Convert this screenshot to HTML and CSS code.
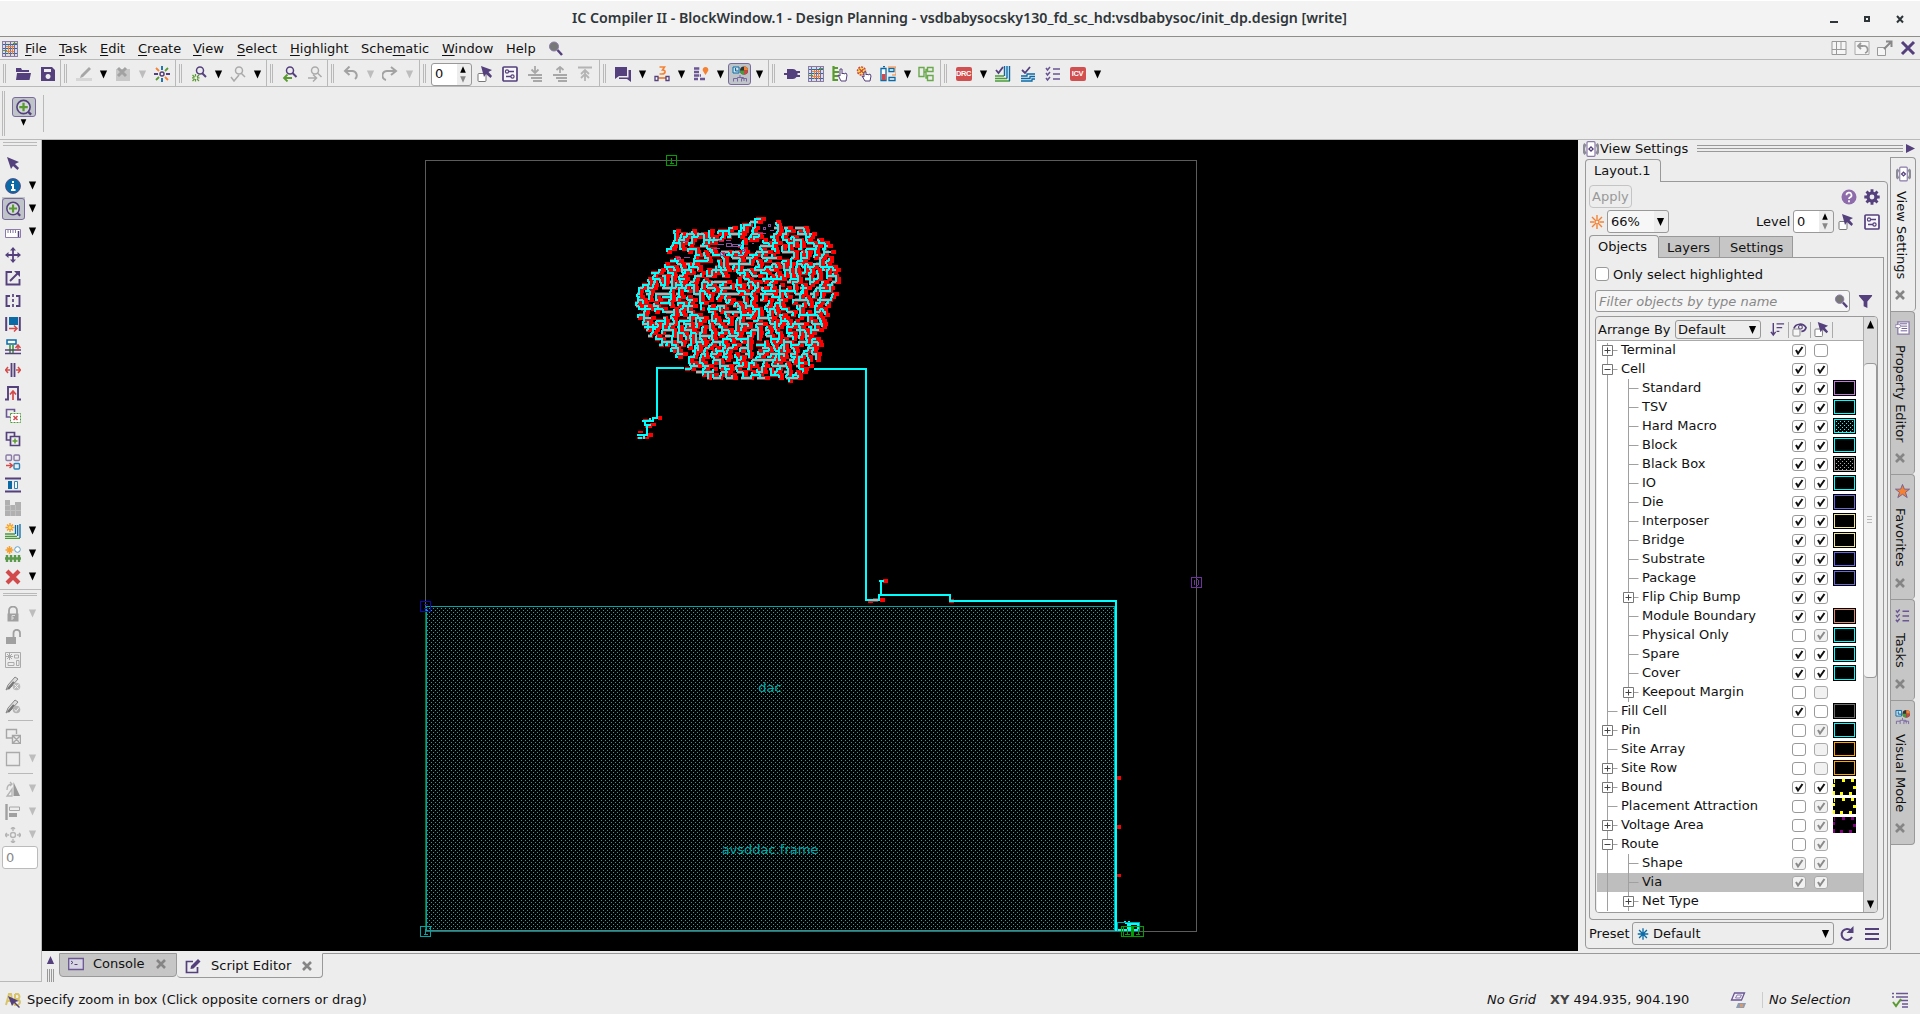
FILE: index.html
```html
<!DOCTYPE html>
<html lang="en">
<head>
<meta charset="utf-8">
<title>IC Compiler II - BlockWindow.1</title>
<link rel="stylesheet" href="styles.css">
</head>
<body>
<svg class="defs" aria-hidden="true">
  <defs>
    <symbol id="app" viewBox="0 0 16 16"><rect x=".5" y=".5" width="15" height="15" fill="#ddd" stroke="#8a7ba8"/><path d="M1 3.500h14M1 7.500h14M1 12.500h14" stroke="#1a6fa8"/><path d="M3.500 1v14M8.500 1v14M12.500 1v14" stroke="#7a68a0"/><path d="M4 5.500h8M4 10.500h8M6.500 4v9M10.500 4v9" stroke="#f0803c"/><path d="M1 9.500h4M11 2.500h4" stroke="#5a9a32"/></symbol>
    <symbol id="mag" viewBox="0 0 16 16"><circle cx="6" cy="5.500" r="4.500" fill="#777" stroke="#8a7ba8"/><path d="M9.500 9l4.500 5" stroke="#54407c" stroke-width="2.500"/></symbol>
    <symbol id="open" viewBox="0 0 16 16"><path d="M1 2h5l1 2h7v2H1zM2 7h14l-1.500 7H1z" fill="#54407c"/></symbol>
    <symbol id="save" viewBox="0 0 16 16"><path fill-rule="evenodd" d="M2 1h10l3 3v11H1V1zM4 3v3h7V3zM8 8a2.500 2.500 0 1 0 .1 0z" fill="#54407c"/></symbol>
    <symbol id="pencil" viewBox="0 0 16 16"><path d="M0 12h16v3H0z" fill="#d6d6d6"/><path d="M13 1l2 2-8 8-3 1 1-3z" fill="#a6a6a6"/></symbol>
    <symbol id="del" viewBox="0 0 16 16"><path d="M1 3h14v12H1z" fill="#c8c8c8"/><path d="M3 2l8 8M11 2l-8 8" stroke="#a2a2a2" stroke-width="3"/></symbol>
    <symbol id="burst" viewBox="0 0 16 16"><circle cx="8" cy="8" r="2" fill="none" stroke="#54407c" stroke-width="1.500"/><path d="M8 0v4M8 12v4" stroke="#0a6aa6" stroke-width="1.800"/><path d="M0 8h4M12 8h4" stroke="#54407c" stroke-width="1.800"/><path d="M2 2l3 3M11 11l3 3" stroke="#f58232" stroke-width="1.800"/><path d="M14 2l-3 3M5 11l-3 3" stroke="#5a9a32" stroke-width="1.800"/></symbol>
    <symbol id="zsel" viewBox="0 0 16 16"><circle cx="9" cy="4.500" r="3.500" fill="none" stroke="#54407c" stroke-width="1.500"/><path d="M11 7l4 4" stroke="#54407c" stroke-width="2"/><path d="M4.500 8v2.500M4.500 13v2.500M1 11.800h2.500M6 11.800h2.500M1.500 9l2 2M8 9l-2 2M1.500 15l2-2M8 15l-2-2" fill="none" stroke="#5a9a32" stroke-width="1.200"/></symbol>
    <symbol id="zchk" viewBox="0 0 16 16"><g fill="none" stroke="#aaa" stroke-width="1.500"><circle cx="9" cy="4.500" r="3.500"/><path d="M11 7l4 4M1 11l3 4 5-6"/></g></symbol>
    <symbol id="zback" viewBox="0 0 16 16"><circle cx="8" cy="4.500" r="3.500" fill="none" stroke="#54407c" stroke-width="1.500"/><path d="M10.500 7l4 4" stroke="#54407c" stroke-width="2"/><path d="M10 12H2M5.500 8.500L2 12l3.500 3.500" fill="none" stroke="#5a9a32" stroke-width="1.800"/></symbol>
    <symbol id="zfwd" viewBox="0 0 16 16"><g fill="none" stroke="#aaa" stroke-width="1.500"><circle cx="8" cy="4.500" r="3.500"/><path d="M10.500 7l4 4M1 12h8M6 8.500L9.500 12 6 15.500"/></g></symbol>
    <symbol id="undo" viewBox="0 0 16 16"><path d="M2 5h7a4.500 4.500 0 0 1 3 8M6.500 .500L2 5l4.500 4" fill="none" stroke="#a2a2a2" stroke-width="2"/></symbol>
    <symbol id="redo" viewBox="0 0 16 16"><path d="M13 5H6a4 4 0 0 0-2 9M9 1l5 4-5 4" fill="none" stroke="#a2a2a2" stroke-width="2"/></symbol>
    <symbol id="pick" viewBox="0 0 16 16"><rect x="1" y="7.500" width="8" height="8" rx="1" fill="#fff" stroke="#777"/><path d="M4 0l11 4-3.500 2L15 10l-1.500 2L9 8 7 11z" fill="#54407c"/></symbol>
    <symbol id="sliders" viewBox="0 0 16 16"><rect x="1" y="1" width="14" height="14" rx="1" fill="#f7f7fb" stroke="#54407c" stroke-width="1.700"/><path d="M7 5.500h5M4 10.500h5" stroke="#54407c" stroke-width="1.300"/><circle cx="5" cy="5.500" r="1.600" fill="none" stroke="#54407c" stroke-width="1.200"/><circle cx="10.500" cy="10.500" r="1.600" fill="none" stroke="#54407c" stroke-width="1.200"/></symbol>
    <symbol id="down" viewBox="0 0 16 16"><path d="M8 0v6M4.500 3.500L8 7l3.500-3.500M1 9h14M4 12h11M6 15h9" fill="none" stroke="#a8a8a8" stroke-width="1.800"/></symbol>
    <symbol id="up" viewBox="0 0 16 16"><path d="M8 7V1M4.500 4L8 1l3.500 3M1 9h14M4 12h11M6 15h9" fill="none" stroke="#a8a8a8" stroke-width="1.800"/></symbol>
    <symbol id="top" viewBox="0 0 16 16"><path d="M1 1.500h14M8 15V4M4 8l4-4 4 4M4 12l4-4 4 4" fill="none" stroke="#b4b4b4" stroke-width="1.800"/></symbol>
    <symbol id="chat" viewBox="0 0 16 16"><path d="M0 1h12v9H4l-4 3zM13.500 4H16v12l-4-3H4v-1.500h9.500z" fill="#54407c"/></symbol>
    <symbol id="net" viewBox="0 0 16 16"><path d="M5.500 1h5L8.500 4c4 0 3 4-.5 4H5.500" fill="none" stroke="#f58232" stroke-width="1.600"/><path d="M3 12h10" stroke="#f58232" stroke-width="1.800"/><path d="M1 10.500h3v4H1zM12 10.500h3v4h-3z" fill="#fff" stroke="#54407c" stroke-width="1.300"/></symbol>
    <symbol id="mapp" viewBox="0 0 16 16"><path d="M1 2.500h6M1 6h5M1 9.500h7M1 13h4M7 13h5" stroke="#6b5694" stroke-width="2.300" stroke-dasharray="5 .7"/><path d="M12.500 9L10 5a2.800 2.800 0 1 1 5 0z" fill="#f58232"/></symbol>
    <symbol id="vis" viewBox="0 0 16 16"><path d="M1 1h6v6H1zM3.500 2v3h3" fill="#cfe3ee" stroke="#0a6aa6"/><circle cx="12" cy="4.500" r="4" fill="#333"/><path d="M12 4.500v-4a4 4 0 0 1 4 4z" fill="#f58232"/><path d="M12 4.500h4a4 4 0 0 1-4 4z" fill="#c84848"/><path d="M12 4.500v4a4 4 0 0 1-4-4z" fill="#4c9a3a"/><path d="M8 9v2M1.500 15.500v-3h4v3M5.500 12.500v-1h6v1M9.500 15.500v-3h5v3M12 12v3" fill="none" stroke="#7a67a4"/></symbol>
    <symbol id="plug" viewBox="0 0 16 16"><path d="M0 7h3V3h6a5 5 0 0 1 3.500 2H16v2h-2.500v2H16v2h-3.500A5 5 0 0 1 9 13H3V9H0z" fill="#54407c"/></symbol>
    <symbol id="treehand" viewBox="0 0 16 16"><path d="M1.500 0v15M2 2h4M2 6h5M2 10h4M2 14h4" fill="none" stroke="#5a9a32" stroke-width="2.200"/><path d="M8 3v7l-2-1 3 6h5l1-6-1-2-2 1-1-1-1 1V3z" fill="#fff" stroke="#54407c"/></symbol>
    <symbol id="xhand" viewBox="0 0 16 16"><circle cx="5.500" cy="5" r="4" fill="#f9dc50" stroke="#c84848" stroke-width="1.500" stroke-dasharray="2 1"/><path d="M3.500 3l4 4M7.500 3l-4 4" stroke="#c84848" stroke-width="1.300"/><path d="M8 6v5l-2-1 3 5h5l1-5-1-2-2 1-1-1-1 1V6z" fill="#fff" stroke="#54407c"/></symbol>
    <symbol id="batt" viewBox="0 0 16 16"><path d="M1 2.500h5v12H1zM3 .500h2" fill="#fff" stroke="#0a6aa6" stroke-width="1.300"/><path d="M2 8h3.500v6H2z" fill="#d24a4a"/><path d="M9 2.500h5v3H9zM9 11.500h6v3H9z" fill="#fff" stroke="#0a6aa6" stroke-width="1.300"/><path d="M8 1h8v8h-4" fill="none" stroke="#f58232"/></symbol>
    <symbol id="gtree" viewBox="0 0 16 16"><path d="M1 1.500h5v9H1zM9.500 1.500H15v4H9.500zM9.500 9.500H15v5H9.500zM6 6h2v6h1.500M8 6V3.500h1.500" fill="none" stroke="#6aa84c" stroke-width="1.400"/></symbol>
    <symbol id="stackg" viewBox="0 0 16 16"><path d="M0 10h9M0 12.500h12M0 15h15" stroke="#4c9a3a" stroke-width="1.400"/><path d="M9.500 0v10M12 0v12.500M14.500 0v15" stroke="#0a6aa6" stroke-width="1.400"/><path d="M1 4l2.500 3L8 1" fill="none" stroke="#54407c" stroke-width="1.800"/></symbol>
    <symbol id="stackb" viewBox="0 0 16 16"><path d="M1 10h6V8h8M1 12.500h9v-2h5M1 15h11v-2h3" fill="none" stroke="#0a6aa6" stroke-width="1.300"/><path d="M2 4l3 3L10 1" fill="none" stroke="#54407c" stroke-width="1.800"/></symbol>
    <symbol id="checks" viewBox="0 0 16 16"><path d="M1 2l1.500 2L5 1M1 7l1.500 2L5 6M1 12l1.500 2L5 11M8 3h7M8 8h7M8 13h7" fill="none" stroke="#6b5694" stroke-width="1.500"/></symbol>
    <symbol id="grid4" viewBox="0 0 16 16"><path d="M1 1.500h14v13H1zM5.500 2v12M1 9.500h14M10 2v8" fill="#f5f5f5" stroke="#999"/></symbol>
    <symbol id="revert" viewBox="0 0 16 16"><path d="M1 1.500h14v13H1z" fill="#f5f5f5" stroke="#aaa"/><path d="M4 6h5a3 3 0 0 1 2 7M7 3L4 6l3 3" fill="none" stroke="#999" stroke-width="1.800"/></symbol>
    <symbol id="detach" viewBox="0 0 16 16"><path d="M.5 7.500h8v8h-8z" fill="#f5f5f5" stroke="#999"/><path d="M7 9l7-7M9 1.500h5.500V7" fill="none" stroke="#888" stroke-width="2"/></symbol>
    <symbol id="bigx" viewBox="0 0 16 16"><path d="M2 2l12 12M14 2L2 14" stroke="#54407c" stroke-width="3"/></symbol>
    <symbol id="zin" viewBox="0 0 18 18"><circle cx="8.500" cy="8.500" r="7" fill="#d5d8dc" stroke="#54407c" stroke-width="1.700"/><path d="M8.500 4v9M4 8.500h9" stroke="#5a9a32" stroke-width="2.400"/><path d="M13.500 13.500l3 3" stroke="#54407c" stroke-width="2.500"/></symbol>
    <symbol id="cur" viewBox="0 0 16 16"><path d="M2 2l12 5-4 2 4 4-1.500 2L8 11l-2 3z" fill="#54407c"/></symbol>
    <symbol id="info" viewBox="0 0 16 16"><circle cx="8" cy="8" r="7.500" fill="#0a6aa6" stroke="#54407c" stroke-width=".8"/><path d="M8 3v2M6 7h2v5M6 12h4.500" fill="none" stroke="#fff" stroke-width="2"/></symbol>
    <symbol id="ruler" viewBox="0 0 16 16"><path d="M.5 5.500h15v8H.5z" fill="#fff" stroke="#8a7ba8"/><path d="M3 6v3M5.500 6v3M8 6v3M10.500 6v3" stroke="#8a7ba8"/><path d="M13.500 7v6" stroke="#54407c" stroke-width="1.500"/></symbol>
    <symbol id="move" viewBox="0 0 16 16"><path d="M8 1v14M1 8h14" stroke="#54407c" stroke-width="1.800"/><path d="M8 0l3 3.500H5zM8 16l3-3.500H5zM0 8l3.500-3v6zM16 8l-3.500-3v6z" fill="#54407c"/></symbol>
    <symbol id="ext" viewBox="0 0 16 16"><path d="M7 2H1.500v12.500h13V9M5 11l8-8" fill="none" stroke="#54407c" stroke-width="1.900"/><path d="M9 1h6v6z" fill="#54407c"/></symbol>
    <symbol id="flip" viewBox="0 0 16 16"><path d="M5 3H1.500v10H5M11 3h3.500v10H11" fill="none" stroke="#54407c" stroke-width="1.900"/><path d="M8 1v14" stroke="#54407c" stroke-width="1.700" stroke-dasharray="3 2"/></symbol>
    <symbol id="fit" viewBox="0 0 16 16"><path d="M1.200 1v14M14.800 1v14" stroke="#54407c" stroke-width="2"/><path d="M4 1h9v8H4z" fill="#0a6aa6"/><path d="M4 12.500h7M9 9.500l3 3-3 3" fill="none" stroke="#d24a4a" stroke-width="1.500"/></symbol>
    <symbol id="tee" viewBox="0 0 16 16"><path d="M2 1h9v4H2z" fill="#fff" stroke="#0a6aa6" stroke-width="1.500"/><path d="M5 6v8M8 6v8" stroke="#4c9a3a" stroke-width="1.700"/><path d="M0 11h16M0 14.500h16" stroke="#54407c" stroke-width="1.500"/><path d="M13 12V7M10.500 9L13 6l2.500 3" fill="none" stroke="#d24a4a" stroke-width="1.500"/></symbol>
    <symbol id="spread" viewBox="0 0 16 16"><path d="M6.500 1v14M9.500 1v14" stroke="#54407c" stroke-width="1.800"/><path d="M3 5L.5 8 3 11M13 5l2.500 3-2.500 3M1 8h4M11 8h4" fill="none" stroke="#d24a4a" stroke-width="1.500"/></symbol>
    <symbol id="step" viewBox="0 0 16 16"><path d="M0 14.500h3V2h10v12.500h3" fill="none" stroke="#54407c" stroke-width="1.900"/><path d="M8 15V7M5 9.500L8 6l3 3.500" fill="none" stroke="#d24a4a" stroke-width="1.700"/></symbol>
    <symbol id="cpx" viewBox="0 0 16 16"><path d="M5 9H1.500V1.500h8V4" fill="none" stroke="#6b5694" stroke-width="1.600"/><path d="M5.500 5.500h10v9h-10z" fill="#fff" stroke="#4c9a3a" stroke-dasharray="2 1"/><path d="M8.500 8l4 4M12.500 8l-4 4" stroke="#d24a4a" stroke-width="1.500"/></symbol>
    <symbol id="cpp" viewBox="0 0 16 16"><path d="M5 9H1.500V1.500h8V5M5.500 5.500h9v9h-9z" fill="none" stroke="#54407c" stroke-width="1.700"/><path d="M10 7.500v5M7.500 10h5" stroke="#5a9a32" stroke-width="1.500"/></symbol>
    <symbol id="four" viewBox="0 0 16 16"><g fill="none" stroke="#8a7ba8" stroke-width="1.400"><rect x="1" y="1" width="5.500" height="5.500" rx="1"/><rect x="9" y="1" width="5.500" height="5.500" rx="1"/></g><rect x="9" y="9.500" width="5.500" height="5.500" rx="1" fill="none" stroke="#2a82ba" stroke-width="1.400"/><path d="M1 11.500h6M4.500 9l3 2.500-3 2.500" fill="none" stroke="#d24a4a" stroke-width="1.500"/></symbol>
    <symbol id="dist" viewBox="0 0 16 16"><path d="M0 1.500h16M0 14.500h16" stroke="#54407c" stroke-width="2"/><path d="M3 4h4v8H3z" fill="#0a6aa6"/><path d="M9.500 4.500h3v7h-3z" fill="#fff" stroke="#2a82ba"/></symbol>
    <symbol id="mosaic" viewBox="0 0 16 16"><path d="M0 0h5v5h5V2h6v14H0z" fill="#b0b0b0"/><path d="M0 5.500h5M0 10.500h16M5.500 5v11M10.500 5v11" stroke="#c0c0c0"/></symbol>
    <symbol id="starl" viewBox="0 0 16 16"><path d="M5 0v9M.5 4.500h9M2 1.500l6 6M8 1.500l-6 6" stroke="#f5a032" stroke-width="1.500"/><circle cx="5" cy="4.500" r="1.500" fill="#fbe060"/><path d="M0 11h10M0 13.300h12M0 15.500h15" stroke="#4c9a3a" stroke-width="1.300"/><path d="M10.500 2v9M12.700 2v11M15 1v14" stroke="#0a6aa6" stroke-width="1.300"/></symbol>
    <symbol id="starg" viewBox="0 0 16 16"><path d="M4.500 0v8M.5 4h8M2 1.500l5 5M7 1.500l-5 5" stroke="#f5a032" stroke-width="1.500"/><circle cx="12.500" cy="3.500" r="2.800" fill="#fff" stroke="#5fa0c8"/><path d="M0 12.500h16M2 9v7M6 9v7M10 9v7M14 9v7" stroke="#5a9a4a" stroke-width="2.400"/></symbol>
    <symbol id="redx" viewBox="0 0 16 16"><path d="M2 2l12 12M14 2L2 14" stroke="#d24a4a" stroke-width="4.200"/></symbol>
    <symbol id="lock" viewBox="0 0 16 16"><path d="M4 8V4.500a4 4 0 0 1 8 0V8" fill="none" stroke="#a0a0a0" stroke-width="1.800"/><path d="M2.500 7.500h11v8h-11z" fill="#a0a0a0"/><path d="M7 14v-4.500h3M7 12h2" fill="none" stroke="#ddd"/></symbol>
    <symbol id="unlock" viewBox="0 0 16 16"><path d="M8.500 8V4a3 3 0 0 1 6.500 0v4" fill="none" stroke="#a0a0a0" stroke-width="1.800"/><path d="M1 8h10v7H1z" fill="#a0a0a0"/></symbol>
    <symbol id="fplan" viewBox="0 0 16 16"><g fill="none" stroke="#aaa"><path d="M.5 .5h15v15H.5zM9.500 3h4v3h-4zM3 10.500h6v3H3zM11.500 8.500h2.500v5h-2.500z"/><path d="M4.500 1v7M1 4.500h7M2 2l5 5M7 2L2 7"/></g></symbol>
    <symbol id="penx" viewBox="0 0 16 16"><path d="M1 15l2-5 7-8 3 2-7 8z" fill="#ddd" stroke="#888"/><path d="M3 14l6-7" stroke="#777" stroke-width="2.500"/><circle cx="11.500" cy="11.500" r="3.800" fill="#bbb"/><path d="M9.500 9.500l4 4M13.500 9.500l-4 4" stroke="#eee"/></symbol>
    <symbol id="penc" viewBox="0 0 16 16"><path d="M1 15l2-5 7-8 3 2-7 8z" fill="#ddd" stroke="#888"/><path d="M3 14l6-7" stroke="#777" stroke-width="2.500"/><circle cx="11.500" cy="11.500" r="3.800" fill="#b4b4b4"/><path d="M9.500 11.500l1.500 2 3-4" fill="none" stroke="#eee"/></symbol>
    <symbol id="cpg" viewBox="0 0 16 16"><path d="M7 10H1.500V1.500h10V6M7.500 7.500h8v8h-8zM7.500 7.500l8 8M15.500 7.500l-8 8" fill="none" stroke="#a6a6a6" stroke-width="1.400"/></symbol>
    <symbol id="box" viewBox="0 0 16 16"><path d="M1.500 1.500h13v13h-13z" fill="none" stroke="#aaa" stroke-width="1.300"/></symbol>
    <symbol id="mir" viewBox="0 0 16 16"><path d="M8.500 1v14H15z" fill="#999"/><path d="M7 8v7H2zM2 9c0-4 2-6 5-6M5 1l2 2-2 2" fill="none" stroke="#b4b4b4" stroke-width="1.300"/></symbol>
    <symbol id="align" viewBox="0 0 16 16"><path d="M1.500 0v16" stroke="#a0a0a0" stroke-width="2.400"/><path d="M4.500 3h10v3.500h-10z" fill="none" stroke="#a6a6a6"/><path d="M4 9h8v4H4z" fill="#a0a0a0"/></symbol>
    <symbol id="tgt" viewBox="0 0 16 16"><g fill="none" stroke="#b4b4b4" stroke-width="1.400"><circle cx="8" cy="8" r="2.500"/><path d="M8 0v4M8 12v4M0 8h4M12 8h4M6 2l2-2 2 2M6 14l2 2 2-2M2 6L0 8l2 2M14 6l2 2-2 2"/></g></symbol>
    <symbol id="eyev" viewBox="0 0 16 16"><path d="M2.500 3A8 8 0 0 0 2.500 13M13.500 3A8 8 0 0 1 13.500 13" fill="none" stroke="#8c8c98" stroke-width="3"/><rect x="4" y=".7" width="8" height="14.600" rx="1" fill="#fff" stroke="#8a7ba8" stroke-width="1.200"/><path d="M8 5l3 3-3 3-3-3z" fill="#54407c"/><circle cx="8" cy="8" r=".9" fill="#fff"/></symbol>
    <symbol id="help" viewBox="0 0 16 16"><circle cx="8" cy="8" r="7.500" fill="#8e6cab"/><path d="M5.500 6.200a2.500 2.500 0 1 1 3.500 2.200q-1 .4-1 1.600M8 11.300v2" fill="none" stroke="#fff" stroke-width="1.700"/></symbol>
    <symbol id="gear" viewBox="0 0 16 16"><circle cx="8" cy="8" r="4" fill="none" stroke="#54407c" stroke-width="3.200"/><path d="M8 .3v3M8 12.700v3M.3 8h3M12.700 8h3M2.500 2.500l2.200 2.200M11.300 11.300l2.200 2.200M13.500 2.500l-2.200 2.200M4.700 11.300l-2.200 2.200" stroke="#54407c" stroke-width="2.900"/></symbol>
    <symbol id="sun" viewBox="0 0 16 16"><circle cx="8" cy="8" r="2" fill="none" stroke="#f58232" stroke-width="1.300"/><path d="M8 1v4M8 11v4M1 8h4M11 8h4M3 3l3 3M10 10l3 3M13 3l-3 3M6 10l-3 3" stroke="#f58232" stroke-width="1.400"/></symbol>
    <symbol id="funnel" viewBox="0 0 16 16"><path d="M1 1h14v1L10 8v7l-4-2V8L1 2z" fill="#54407c"/></symbol>
    <symbol id="sort" viewBox="0 0 16 16"><path d="M3.500 1v12M1 10.500l2.500 3.500L6 10.500M7 2h8M7 6h6M7 10h3" fill="none" stroke="#54407c" stroke-width="1.500"/></symbol>
    <symbol id="seen" viewBox="0 0 16 16"><path d="M2 7c2-6 10-6 13-1-1 3-3 4-5 4" fill="none" stroke="#54407c" stroke-width="1.800"/><circle cx="9" cy="5.500" r="2" fill="none" stroke="#54407c" stroke-width="1.200"/><rect x="1" y="7.500" width="7.500" height="7.500" rx="1" fill="#f5f5f5" stroke="#888"/></symbol>
    <symbol id="prop" viewBox="0 0 16 16"><path d="M3 1.500h12v13H3z" fill="#fff" stroke="#8a7ba8" stroke-width="1.400"/><path d="M5 3.500h8M7 6h6M7 8.500h6M6 11h7" stroke="#6b5694"/><path d="M0 5l4-1 3 2-3 2-4-1z" fill="#fff" stroke="#8a7ba8"/></symbol>
    <symbol id="fav" viewBox="0 0 16 16"><path d="M8 1l2 5h5.500l-4.300 3.500L13 15 8 11.500 3 15l1.800-5.500L.5 6H6z" fill="#f58232" stroke="#6b5694" stroke-width=".9"/></symbol>
    <symbol id="snow" viewBox="0 0 16 16"><path d="M8 1.500v13M2 8h12M3.500 3.500l9 9M12.500 3.500l-9 9" stroke="#0a6aa6" stroke-width="1.500"/></symbol>
    <symbol id="refresh" viewBox="0 0 16 16"><path d="M12 4.500A5.500 5.500 0 1 0 13 11" fill="none" stroke="#54407c" stroke-width="2"/><path d="M14.500 0v7h-7z" fill="#54407c"/></symbol>
    <symbol id="menu" viewBox="0 0 16 16"><path d="M1 3h14M1 8h14M1 13h14" stroke="#54407c" stroke-width="2"/></symbol>
    <symbol id="smx" viewBox="0 0 10 10"><path d="M1 1l8 8M9 1L1 9" stroke="#858585" stroke-width="2.600"/></symbol>
    <symbol id="term" viewBox="0 0 16 16"><path d="M.7 2.500h14.600v11H.7z" fill="#d8d5e2" stroke="#6b5694" stroke-width="1.300"/><path d="M3 5l2 1.500L3 8M6.500 8.500h3" fill="none" stroke="#54407c"/></symbol>
    <symbol id="edit" viewBox="0 0 16 16"><path d="M8 3.500H1.500v11h11V9" fill="none" stroke="#54407c" stroke-width="1.700"/><path d="M6 8l7-7 2.500 2.500-7 7-3 .5z" fill="#54407c"/></symbol>
    <symbol id="hint" viewBox="0 0 16 16"><path d="M1 13L4 2h2l2 11M2 9h5M10 2v12M10 2h3q3 3 0 5h-3M13 7q4 3 0 6h-3" fill="none" stroke="#d9c468" stroke-width="2"/><path d="M3 4l11 5-4 1 5 5-1 1-5-5-2 3z" fill="#54407c"/></symbol>
    <symbol id="layers" viewBox="0 0 16 16"><path d="M4.500 1h10l-3 7h-10z" fill="#f3f0fa" stroke="#6b5694" stroke-width="1.300"/><path d="M7 3h4.500l-1.500 3H5.500z" fill="none" stroke="#8a7ba8"/><path d="M8 11h8l-2 5H6z" fill="#8f9bb0"/><path d="M10 12h3v3h-3z" fill="#d89a6a"/></symbol>
    <symbol id="okl" viewBox="0 0 16 16"><path d="M0 1.500h2M4 1.500h12M0 5h2M4 5h12M8 8.500h8M10 12h6M10 15h6" stroke="#6b5694" stroke-width="1.700"/><path d="M1 10l3 4 5-7" fill="none" stroke="#5a9a32" stroke-width="2"/></symbol>
    <symbol id="dd" viewBox="0 0 10 10"><path d="M1 .5h8L5 9.500z"/></symbol>
    <symbol id="du" viewBox="0 0 10 10"><path d="M1 9.500h8L5 .5z"/></symbol>
  </defs>
</svg>
<div class="window">
  <header class="titlebar">
    <span class="title">IC Compiler II - BlockWindow.1 - Design Planning - vsdbabysocsky130_fd_sc_hd:vsdbabysoc/init_dp.design [write]</span>
    <svg class="winctl" viewBox="0 0 80 16"><path d="M1 11h8" stroke="#2f3639" stroke-width="2"/><path d="M36 6h4v4h-4z" fill="none" stroke="#2f3639" stroke-width="2"/><path d="M68 5l6 6.500M74 5l-6 6.500" stroke="#2f3639" stroke-width="2"/></svg>
  </header>
  <nav class="menubar">
    <svg class="i"><use href="#app"/></svg>
    <span class="m-file"><u>F</u>ile</span><span class="m-task"><u>T</u>ask</span><span class="m-edit"><u>E</u>dit</span><span class="m-create"><u>C</u>reate</span><span class="m-view"><u>V</u>iew</span><span class="m-select"><u>S</u>elect</span><span class="m-high"><u>H</u>ighlight</span><span class="m-schem">Sche<u>m</u>atic</span><span class="m-window"><u>W</u>indow</span><span class="m-help">Help</span>
    <svg class="i"><use href="#mag"/></svg>
    <div class="mdi"><svg class="i"><use href="#grid4"/></svg><svg class="i"><use href="#revert"/></svg><svg class="i"><use href="#detach"/></svg><svg class="i"><use href="#bigx"/></svg></div>
  </nav>
  <div class="toolbar">
    <div class="grp g1"><b><svg><use href="#open"/></svg></b><b><svg><use href="#save"/></svg></b></div>
    <div class="grp g2"><b><svg><use href="#pencil"/></svg></b><i><svg><use href="#dd"/></svg></i><b><svg><use href="#del"/></svg></b><i class="off"><svg><use href="#dd"/></svg></i><b><svg><use href="#burst"/></svg></b></div>
    <div class="grp g3"><b><svg><use href="#zsel"/></svg></b><i><svg><use href="#dd"/></svg></i><b><svg><use href="#zchk"/></svg></b><i><svg><use href="#dd"/></svg></i></div>
    <div class="grp g4"><b><svg><use href="#zback"/></svg></b><b><svg><use href="#zfwd"/></svg></b></div>
    <div class="grp g5"><b><svg><use href="#undo"/></svg></b><i class="off"><svg><use href="#dd"/></svg></i><b><svg><use href="#redo"/></svg></b><i class="off"><svg><use href="#dd"/></svg></i></div>
    <div class="grp g6"><div class="spin"><span>0</span><div class="ud"><svg><use href="#du"/></svg><svg><use href="#dd"/></svg></div></div><b><svg><use href="#pick"/></svg></b><b><svg><use href="#sliders"/></svg></b><b><svg><use href="#down"/></svg></b><b><svg><use href="#up"/></svg></b><b><svg><use href="#top"/></svg></b></div>
    <div class="grp g7"><b><svg><use href="#chat"/></svg></b><i><svg><use href="#dd"/></svg></i><b><svg><use href="#net"/></svg></b><i><svg><use href="#dd"/></svg></i><b><svg><use href="#mapp"/></svg></b><i><svg><use href="#dd"/></svg></i><b class="on"><svg><use href="#vis"/></svg></b><i><svg><use href="#dd"/></svg></i></div>
    <div class="grp g8"><b><svg><use href="#plug"/></svg></b><b><svg><use href="#app"/></svg></b><b><svg><use href="#treehand"/></svg></b><b><svg><use href="#xhand"/></svg></b><b><svg><use href="#batt"/></svg></b><i><svg><use href="#dd"/></svg></i><b><svg><use href="#gtree"/></svg></b></div>
    <div class="grp g9"><b><span class="tag">DRC</span></b><i><svg><use href="#dd"/></svg></i><b><svg><use href="#stackg"/></svg></b><b><svg><use href="#stackb"/></svg></b><b><svg><use href="#checks"/></svg></b><b><span class="tag">ICV</span></b><i><svg><use href="#dd"/></svg></i></div>
  </div>
  <div class="toolbar2"><div class="mode"><b class="on"><svg class="z"><use href="#zin"/></svg></b><i><svg><use href="#dd"/></svg></i></div></div>
  <div class="main">
    <div class="left">
      <div class="workrow">
        <aside class="tools">
          <div class="grip"></div>
          <div class="t"><svg><use href="#cur"/></svg></div>
          <div class="t"><svg><use href="#info"/></svg><svg class="d"><use href="#dd"/></svg></div>
          <div class="t sel"><svg class="z"><use href="#zin"/></svg><svg class="d"><use href="#dd"/></svg></div>
          <div class="t"><svg><use href="#ruler"/></svg><svg class="d"><use href="#dd"/></svg></div>
          <div class="t"><svg><use href="#move"/></svg></div>
          <div class="t"><svg><use href="#ext"/></svg></div>
          <div class="t"><svg><use href="#flip"/></svg></div>
          <div class="t"><svg><use href="#fit"/></svg></div>
          <div class="t"><svg><use href="#tee"/></svg></div>
          <div class="t"><svg><use href="#spread"/></svg></div>
          <div class="t"><svg><use href="#step"/></svg></div>
          <div class="t"><svg><use href="#cpx"/></svg></div>
          <div class="t"><svg><use href="#cpp"/></svg></div>
          <div class="t"><svg><use href="#four"/></svg></div>
          <div class="t"><svg><use href="#dist"/></svg></div>
          <div class="t"><svg><use href="#mosaic"/></svg></div>
          <div class="t"><svg><use href="#starl"/></svg><svg class="d"><use href="#dd"/></svg></div>
          <div class="t"><svg><use href="#starg"/></svg><svg class="d"><use href="#dd"/></svg></div>
          <div class="t"><svg><use href="#redx"/></svg><svg class="d"><use href="#dd"/></svg></div>
          <div class="rule"></div>
          <div class="grip g-low"></div>
          <div class="t"><svg><use href="#lock"/></svg><svg class="d off"><use href="#dd"/></svg></div>
          <div class="t"><svg><use href="#unlock"/></svg></div>
          <div class="t"><svg><use href="#fplan"/></svg></div>
          <div class="t"><svg><use href="#penx"/></svg></div>
          <div class="t"><svg><use href="#penc"/></svg></div>
          <div class="sep"></div>
          <div class="t"><svg><use href="#cpg"/></svg></div>
          <div class="t"><svg><use href="#box"/></svg><svg class="d off"><use href="#dd"/></svg></div>
          <div class="sep"></div>
          <div class="t"><svg><use href="#mir"/></svg><svg class="d off"><use href="#dd"/></svg></div>
          <div class="t"><svg><use href="#align"/></svg><svg class="d off"><use href="#dd"/></svg></div>
          <div class="t"><svg><use href="#tgt"/></svg><svg class="d off"><use href="#dd"/></svg></div>
          <div class="num">0</div>
        </aside>
        <div class="canvascol">
          <svg class="layout" viewBox="42 140 1536 811" shape-rendering="crispEdges">
            <defs><pattern id="dots" width="4" height="4" patternUnits="userSpaceOnUse"><path d="M1 0h1v1h-1zM3 2h1v1h-1z" fill="#0fa9a9"/></pattern></defs>
            <path d="M425.500 160.500H1196.500V931.500H425.500z" fill="none" stroke="#5c5c5c"/>
            <rect x="427" y="607" width="688" height="323" fill="url(#dots)"/>
            <path d="M426.500 606.500H1114.500V930.500H426.500z" fill="none" stroke="#00a5a5"/>
            <path d="M425.500 608V930" stroke="#0a7a2a"/>
            <g class="cellname"><text x="770" y="692">dac</text><text x="770" y="854">avsddac.frame</text></g>
            <g fill="none"><path d="M666.500 155.500h10v10h-10zM671.500 158v5M669.500 163.500h4" stroke="#00a000"/><path d="M1191.500 577.500h10v10h-10zM1194.500 580v5M1198.500 580v5M1196 579.500h2M1196 585.500h2" stroke="#7030a0"/><path d="M420.500 601.500h10v10h-10zM424 604.500h4M424 608.500h4" stroke="#0a0ab4"/><path d="M420.500 926.500h10v10h-10zM425.500 929v5M423.500 934.500h4" stroke="#00a5a5"/></g>
            <path id="red" fill="#f00"/><path id="cyan" fill="none" stroke="#0ff" stroke-width="2"/>
            <path fill="none" stroke="#8a50a0" d="M718 240.500h6M726 240.500h5M718 244.500h6M726 243.500h5v3h-5zM732 244.500h8v2h-8zM752 243.500h2M677.500 257.500h3v2h-3zM684 257.500h6M720 252.500h4v3h-4zM738 254.500h5M742.500 249.500h3v2h-3zM714 248.500h6M758 233.500h8M763.500 227.500h2v2h-2zM768.500 224.500h2v2h-2zM770 230.500h4M683 241.500h5"/>
            <path fill="#f00" d="M868 601h5v2h-5zM873 598h5v4h-5zM880 598h5v4h-5zM883 579h5v4h-5zM949 599h5v4h-5zM1117 776h4v4h-4zM1117 825h4v4h-4zM1117 874h4v3h-4zM658 416h4v4h-4zM643 419h7v2h-7zM650 423h6v3h-6zM645 426h7v2h-7zM638 431h5v2h-5zM647 433h6v4h-6zM637 437h12v2h-12z"/>
            <path d="M684 368H657V418H653V421H642M650 418V421M645 420V425H651M647 424V435H637M638 438H642M644 436V439M814 369H866V600H879V595H950V601H1116V930H1139M879 581H884M881 581V595" fill="none" stroke="#0ff" stroke-width="2"/>
            <path d="M1124 921h2v2h-2zM1128 921h2v2h-2zM1125 922h6v2h-6zM1127 922h4v8h-4zM1130 923h9v2h-9zM1137 923h2v8h-2zM1131 926h5v1h-5z" fill="#0ff"/>
            <path d="M1139.500 931V922.500H1117.500V931" fill="none" stroke="#00a5a5"/>
            <path d="M1121.500 926.500h10v10h-10zM1123.500 926.500h10v10h-10zM1132.500 926.500h11v10h-11zM1127.500 929v5M1125 934.500h5M1138.500 929v5M1136 934.500h4" fill="none" stroke="#00a000"/>
          </svg>
          <div class="bottabs">
            <div class="pull"><svg><use href="#du"/></svg><em></em></div>
            <div class="btab con"><svg class="i"><use href="#term"/></svg><span>Console</span><svg class="x"><use href="#smx"/></svg></div>
            <div class="btab scr"><svg class="i"><use href="#edit"/></svg><span>Script Editor</span><svg class="x"><use href="#smx"/></svg></div>
            <div class="fill"></div>
          </div>
        </div>
      </div>
    </div>
    <aside class="panel">
      <div class="phead"><svg class="i"><use href="#eyev"/></svg><span>View Settings</span><div class="lines"></div><svg class="tri" viewBox="0 0 9 9"><path d="M0 0l9 4.500L0 9z" fill="#54407c"/></svg></div>
      <div class="pbody">
        <div class="pl">
          <div class="ltab">Layout.1</div>
          <div class="lbox">
            <div class="r1"><div class="apply">Apply</div><svg class="i"><use href="#help"/></svg><svg class="i"><use href="#gear"/></svg></div>
            <div class="r2"><svg class="i"><use href="#sun"/></svg><div class="combo pct"><span>66%</span><svg><use href="#dd"/></svg></div><span class="lvl">Level</span><div class="spin"><span>0</span><div class="ud"><svg><use href="#du"/></svg><svg><use href="#dd"/></svg></div></div><svg class="i"><use href="#pick"/></svg><svg class="i sl"><use href="#sliders"/></svg></div>
            <div class="otabs"><div class="act">Objects</div><div class="lay">Layers</div><div class="set">Settings</div><div class="fill"></div></div>
            <div class="obox">
              <div class="only"><span class="cb"></span>Only select highlighted</div>
              <div class="frow"><div class="filter"><span>Filter objects by type name</span><svg class="i"><use href="#mag"/></svg></div><svg class="i"><use href="#funnel"/></svg></div>
              <div class="treebox">
                <div class="treemain">
                  <div class="thead"><span>Arrange By</span><div class="combo"><span>Default</span><svg><use href="#dd"/></svg></div><div class="h h1"><svg class="i"><use href="#sort"/></svg></div><div class="h"><svg class="i"><use href="#seen"/></svg></div><div class="h"><svg class="i"><use href="#pick"/></svg></div></div>
                  <div class="rows" id="rows"></div>
                </div>
                <div class="scroll"><svg><use href="#du"/></svg><div class="thumb"></div><svg class="dn"><use href="#dd"/></svg></div>
              </div>
            </div>
            <div class="preset"><span>Preset</span><div class="combo"><svg class="s"><use href="#snow"/></svg><span>Default</span><svg><use href="#dd"/></svg></div><svg class="i"><use href="#refresh"/></svg><svg class="i"><use href="#menu"/></svg></div>
          </div>
        </div>
        <div class="vtabs">
          <div class="vt v1 cur"><svg class="i"><use href="#eyev"/></svg><span>View Settings</span><svg class="x"><use href="#smx"/></svg></div>
          <div class="vt v2"><svg class="i"><use href="#prop"/></svg><span>Property Editor</span><svg class="x"><use href="#smx"/></svg></div>
          <div class="vt v3"><svg class="i"><use href="#fav"/></svg><span>Favorites</span><svg class="x"><use href="#smx"/></svg></div>
          <div class="vt v4"><svg class="i"><use href="#checks"/></svg><span>Tasks</span><svg class="x"><use href="#smx"/></svg></div>
          <div class="vt v5"><svg class="i"><use href="#vis"/></svg><span>Visual Mode</span><svg class="x"><use href="#smx"/></svg></div>
        </div>
      </div>
    </aside>
  </div>
  <footer class="status">
    <svg class="i"><use href="#hint"/></svg><span class="msg">Specify zoom in box (Click opposite corners or drag)</span>
    <span class="grid">No Grid</span><span class="xy"><b>XY</b> 494.935, 904.190</span><svg class="i"><use href="#layers"/></svg><span class="nosel">No Selection</span><svg class="i"><use href="#okl"/></svg>
  </footer>
</div>
<script src="app.js"></script>
</body>
</html>
```
FILE: styles.css
```css
* { box-sizing: border-box; }
body { margin: 0; width: 1920px; height: 1014px; overflow: hidden; background: #ededed; color: #111; font: 13px/16px "DejaVu Sans", sans-serif; }
.defs { display: none; }
svg { display: block; flex: none; }
.i { width: 16px; height: 16px; }
.window { display: flex; flex-direction: column; height: 1014px; }

.titlebar { height: 37px; flex: none; display: flex; align-items: center; background: #f3f3f3; border-top: 1px solid #fff; border-bottom: 1px solid #8f8f88; padding: 0 0 2px 572px; }
.title { width: 776px; flex: none; white-space: nowrap; font: 600 14.2px/20px "Noto Sans", sans-serif; color: #2f3639; }
.winctl { width: 80px; height: 16px; margin: 2px 0 0 481px; }

.menubar { height: 23px; flex: none; display: flex; align-items: center; border-bottom: 1px solid #b9b9b9; padding-left: 2px; white-space: nowrap; }
.menubar > .i { margin-top: 1px; }
.menubar span { margin-top: 1px; flex: none; }
.menubar u { text-underline-offset: 2px; }
.m-file { width: 34px; margin-left: 7px; }
.m-task { width: 41px; }
.m-edit { width: 38px; }
.m-create { width: 55px; }
.m-view { width: 44px; }
.m-select { width: 53px; }
.m-high { width: 71px; }
.m-schem { width: 81px; }
.m-window { width: 64px; }
.m-help { width: 42px; }
.mdi { margin-left: auto; padding-right: 4px; display: flex; gap: 7px; }

.toolbar { height: 27px; flex: none; display: flex; border-bottom: 1px solid #b9b9b9; }
.grp { height: 26px; display: flex; align-items: center; border-right: 1px solid #b9b9b9; padding: 2px 0 0 10px; background: linear-gradient(#b9b9b9, #b9b9b9) 3px 4px / 1px 19px no-repeat, linear-gradient(#b9b9b9, #b9b9b9) 5px 4px / 1px 19px no-repeat; }
.grp b, .mode b { width: 25px; height: 22px; flex: none; display: flex; align-items: center; justify-content: center; }
.grp b svg { width: 16px; height: 16px; }
.grp i, .mode i { width: 14px; flex: none; display: flex; justify-content: center; }
.grp i svg, .mode i svg { width: 9px; height: 9px; }
.off { fill: #bdbdbd; }
.g1 { width: 61px; }
.g2 { width: 115px; }
.g3 { width: 91px; }
.g4 { width: 61px; }
.g5 { width: 92px; }
.g6 { width: 180px; padding-left: 11px; }
.g7 { width: 169px; }
.g8 { width: 172px; padding-left: 11px; }
.g8 b { width: 24px; }
.g9 { border: 0; }
.grp .on, .mode .on { background: #bfc4c8; border: 1px solid #7a6a9c; border-radius: 3px; }
.grp .on { width: 23px; margin: 0 1px; }
.spin { width: 41px; height: 23px; flex: none; border: 1px solid #999; border-radius: 3px; background: linear-gradient(90deg, #fff 25px, #ededed 25px); display: flex; align-items: center; justify-content: space-between; padding: 0 4px 0 3px; }
.ud { display: flex; flex-direction: column; gap: 3px; }
.ud svg { width: 8px; height: 7px; }
.ud svg + svg { fill: #888; }
.tag { width: 16px; height: 14px; border-radius: 2px; background: #d24f4f; color: #fff; font: bold 7.5px/14px "Liberation Sans", sans-serif; text-align: center; letter-spacing: -.4px; }

.toolbar2 { height: 53px; flex: none; border-bottom: 1px solid #b9b9b9; padding-top: 8px; background: linear-gradient(#b9b9b9, #b9b9b9) 2px 4px / 1px 45px no-repeat, linear-gradient(#b9b9b9, #b9b9b9) 4px 4px / 1px 45px no-repeat; }
.mode { width: 44px; height: 37px; border-right: 1px solid #b9b9b9; padding: 2px 0 0 12px; display: flex; flex-direction: column; }
.mode b { width: 24px; height: 20px; }
.mode i { width: 22px; margin-top: 2px; }
.mode i svg { height: 7px; }
.z { width: 18px; height: 17px; }

.main { height: 842px; flex: none; display: flex; }
.left { width: 1578px; flex: none; }
.workrow { display: flex; height: 842px; }
.tools { width: 42px; flex: none; border-right: 1px solid #b9b9b9; border-bottom: 1px solid #b9b9b9; }
.grip { height: 4px; margin: 2px 4px 5px 3px; border-top: 1px solid #b9b9b9; border-bottom: 1px solid #b9b9b9; }
.t { height: 23px; display: flex; align-items: center; padding-left: 5px; }
.t svg { width: 16px; height: 16px; }
.t .d { width: 9px; height: 9px; margin-left: 7px; }
.t.sel { margin-left: 2px; padding-left: 2px; width: 36px; background: linear-gradient(#bfc4c8, #bfc4c8) 0 0 / 23px 22px no-repeat; }
.t.sel .z { width: 23px; height: 22px; padding: 2px; margin: 0 0 0 -2px; border: 1px solid #7a6a9c; border-radius: 3px; }
.t.sel .d { margin-left: 3px; }
.rule { height: 1px; background: #b9b9b9; margin-top: 1px; }
.grip.g-low { margin: 3px 4px 6px 3px; height: 3px; }
.sep { height: 1px; background: #b9b9b9; margin: 3px 8px 3px 8px; }
.num { width: 36px; height: 23px; margin: 0 0 0 2px; border: 1px solid #bbb; border-radius: 3px; background: #fff; color: #888; padding: 3px 3px; }

.canvascol { width: 1536px; flex: none; display: flex; flex-direction: column; }
.layout { width: 1536px; height: 811px; background: #000; }
.cellname { fill: #0aa; font-size: 13px; text-anchor: middle; }
.bottabs { height: 31px; display: flex; align-items: flex-start; padding-top: 2px; width: 1878px; }
.pull { width: 17px; flex: none; padding: 2px 0 0 4px; }
.pull svg { width: 9px; height: 10px; fill: #54407c; }
.pull em { display: block; width: 7px; height: 13px; margin: 4px 0 0 1px; background: repeating-linear-gradient(90deg, #999 0 1px, transparent 1px 2px); }
.btab { display: flex; align-items: center; border: 1px solid #999; border-radius: 0 0 4px 4px; }
.con { width: 118px; height: 24px; background: #c6c6c6; padding: 0 0 2px 8px; }
.con span { width: 63px; margin-left: 9px; }
.scr { width: 146px; height: 25px; border-top-color: transparent; border-left: 0; padding-left: 8px; }
.scr span { width: 91px; margin-left: 10px; white-space: nowrap; }
.x { width: 10px; height: 10px; }
.bottabs .fill { flex: 1; height: 1px; background: #999; }

.panel { width: 342px; flex: none; height: 812px; }
.phead { height: 17px; display: flex; align-items: center; padding-left: 5px; }
.phead span { width: 97px; margin-left: 1px; }
.phead .lines { width: 206px; height: 7px; background: repeating-linear-gradient(#999 0 1px, transparent 1px 3px); }
.phead .tri { width: 9px; height: 9px; margin-left: 3px; }
.pbody { display: flex; height: 793px; }
.pl { width: 312px; flex: none; padding: 2px 0 0 7px; }
.ltab { width: 76px; height: 23px; border: 1px solid #999; border-bottom: 0; border-radius: 4px 4px 0 0; padding: 3px 8px; margin-bottom: -1px; background: #ededed; position: relative; }
.lbox { width: 303px; height: 768px; border: 1px solid #999; border-radius: 0 4px 4px 4px; padding: 3px 3px; }
.r1, .r2, .frow, .preset { display: flex; align-items: center; }
.apply { width: 43px; height: 23px; border: 1px solid #c4c4c4; border-radius: 4px; color: #999; padding: 3px 2px; margin-right: 209px; }
.r1 .i + .i { margin-left: 7px; }
.r2 { height: 23px; margin-top: 2px; }
.r2 > .i:first-child { margin-right: 2px; }
.combo { display: flex; align-items: center; justify-content: space-between; border: 1px solid #999; border-radius: 3px; padding: 0 3px 0 3px; }
.combo > svg:last-child { width: 9px; height: 10px; }
.pct { width: 62px; height: 23px; background: linear-gradient(90deg, #f7f7f7 46px, #ededed 46px); }
.lvl { margin-left: 87px; width: 37px; }
.r2 .spin { margin-right: 4px; }
.sl { margin-left: 10px; }
.otabs { display: flex; align-items: flex-end; height: 23px; margin-top: 2px; }
.otabs > div { border: 1px solid #999; border-left: 0; height: 22px; padding: 3px 8px; background: #c6c6c6; }
.otabs .act { width: 70px; height: 23px; border: 1px solid #999; border-bottom: 0; border-radius: 4px 4px 0 0; background: #ededed; }
.otabs .lay { width: 61px; }
.otabs .set { width: 73px; padding-left: 10px; }
.otabs .fill { flex: 0 0 91px; height: 1px; padding: 0; border: 0; background: #999; }
.obox { width: 295px; height: 662px; border: 1px solid #999; border-top: 0; border-radius: 0 0 4px 4px; padding: 8px 5px 0; }
.only { display: flex; align-items: center; height: 16px; padding-top: 2px; }
.cb { width: 14px; height: 14px; flex: none; border: 1px solid #999; border-radius: 3px; background: #fff; display: block; }
.only .cb { margin: -2px 4px 0 0; }
.frow { margin-top: 8px; }
.filter { width: 255px; height: 22px; border: 1px solid #999; border-radius: 3px; background: #f5f5f5; display: flex; align-items: center; justify-content: space-between; padding: 1px 0 0 3px; font-style: italic; color: #888; margin-right: 8px; }
.filter .i { width: 15px; height: 15px; }
.frow > .i { width: 15px; height: 15px; }
.treebox { width: 283px; height: 597px; margin-top: 4px; border: 1px solid #999; border-radius: 4px; display: flex; overflow: hidden; padding-left: 1px; }
.treemain { width: 266px; flex: none; }
.thead { height: 24px; display: flex; align-items: center; border-bottom: 1px solid #aaa; white-space: nowrap; padding-top: 2px; }
.thead > span { width: 78px; padding-left: 1px; }
.thead .combo { width: 86px; height: 19px; padding: 0 3px 0 2px; }
.h { width: 22px; height: 16px; border-right: 1px solid #aaa; display: flex; justify-content: center; }
.h1 { width: 28px; padding-left: 5px; }
.h .i { width: 15px; height: 15px; }
.rows { background: #fff; height: 571px; overflow: hidden; }
.row { height: 19px; display: flex; align-items: flex-start; }
.row.hot { background: #bebebe; }
.row .tl { width: 24px; height: 19px; }
.row .tl + .tl { width: 21px; }
.row .name { flex: 1; white-space: nowrap; padding-top: 1px; }
.row .cb { margin-top: 3px; height: 13px; }
.row .cb + .cb { margin-left: 8px; }
.cb.dim { background: #f1f1f1; border-color: #aaa; }
.sw { width: 23px; height: 16px; margin: 1px 7px 0 5px; flex: none; }
.scroll { width: 14px; flex: none; background: #dcdcdc; border-left: 1px solid #aaa; padding-top: 3px; }
.scroll svg { width: 9px; height: 9px; margin: 0 auto; }
.thumb { height: 315px; margin: 34px 0 0; border: 1px solid #999; border-left: 0; border-radius: 4px; background: linear-gradient(#bbb, #bbb) 3px 152px / 5px 1px no-repeat, linear-gradient(#bbb, #bbb) 3px 155px / 5px 1px no-repeat, linear-gradient(#bbb, #bbb) 3px 158px / 5px 1px no-repeat, #f3f3f3; }
.scroll .dn { margin-top: 222px; }
.preset { margin-top: 2px; }
.preset > span { width: 43px; }
.preset .combo { width: 202px; height: 23px; }
.preset .combo .s { width: 14px; height: 14px; margin: 0 3px 0 0; }
.preset .combo span { flex: 1; }
.preset > .i { margin-left: 5px; }
.preset > .i + .i { margin-left: 9px; }

.vtabs { width: 25px; border-left: 1px solid #999; height: 793px; display: flex; flex-direction: column; font-size: 13px; }
.vt { width: 24px; border: 1px solid #999; border-left: 0; border-bottom: 0; border-radius: 0 4px 4px 0; background: #c6c6c6; display: flex; flex-direction: column; align-items: center; padding: 8px 0 11px; }
.vt.cur { background: #ededed; width: 25px; }
.vt span { writing-mode: vertical-rl; line-height: 18px; margin: 9px 5px 0 0; flex: 1; white-space: nowrap; }
.vt .i { width: 15px; height: 16px; }
.vt .x { margin-right: 6px; }
.v1 { height: 154px; }
.v2 { height: 163px; }
.v3 { height: 125px; }
.v4 { height: 101px; }
.v5 { height: 145px; border-bottom: 1px solid #999; }

.status { height: 32px; display: flex; align-items: center; padding: 3px 0 0 5px; white-space: nowrap; }
.msg { margin-left: 6px; width: 1460px; }
.grid { width: 63px; font-style: italic; }
.xy { width: 180px; }
.xy b { color: #444; }
.nosel { width: 130px; margin-left: 16px; border-left: 1px solid #ccc; padding-left: 6px; font-style: italic; }
```
FILE: app.js
```js
// Object tree: level, expander, name, visible, selectable, swatch
// v/s: 1 checked, 0 empty, d dim+checked, e dim+empty
const objects = [
  [1, '+', 'Terminal', '1', '0', ''], [1, '-', 'Cell', '1', '1', ''],
  [2, '', 'Standard', '1', '1', '#c478dc'], [2, '', 'TSV', '1', '1', '#00ffff'],
  [2, '', 'Hard Macro', '1', '1', 'dot#00ffff'], [2, '', 'Block', '1', '1', '#00ffff'],
  [2, '', 'Black Box', '1', '1', 'dot#a8a8a8'], [2, '', 'IO', '1', '1', '#00ffff'],
  [2, '', 'Die', '1', '1', '#6a6ae0'], [2, '', 'Interposer', '1', '1', '#f0e890'],
  [2, '', 'Bridge', '1', '1', '#f0e890'], [2, '', 'Substrate', '1', '1', '#6a6ae0'],
  [2, '', 'Package', '1', '1', '#6a6ae0'], [2, '+', 'Flip Chip Bump', '1', '1', ''],
  [2, '', 'Module Boundary', '1', '1', '#e08868'], [2, '', 'Physical Only', '0', 'd', '#00ffff'],
  [2, '', 'Spare', '1', '1', '#00ffff'], [2, '', 'Cover', '1', '1', '#00ffff'],
  [2, '+', 'Keepout Margin', '0', 'e', ''], [1, '', 'Fill Cell', '1', '0', '#6c6c6c'],
  [1, '+', 'Pin', '0', 'd', '#00ffff'], [1, '', 'Site Array', '0', 'e', '#ffa500'],
  [1, '+', 'Site Row', '0', 'e', '#ffa500'], [1, '+', 'Bound', '1', '1', 'dash#ff0'],
  [1, '', 'Placement Attraction', '0', 'd', 'dash#ff0'], [1, '+', 'Voltage Area', '0', 'd', 'dash#800080'],
  [1, '-', 'Route', '0', 'd', ''], [2, '', 'Shape', 'd', 'd', ''],
  [2, '', 'Via', 'd', 'd', ''], [2, '+', 'Net Type', '0', '0', '']
];
const checkbox = s => {
  const on = s === '1' || s === 'd';
  return `<span class="cb${s === 'd' || s === 'e' ? ' dim' : ''}">${on ? `<svg width="12" height="11"><path d="M3 5l2 3.500L9.500 2" fill="none" stroke="${s === 'd' ? '#8a8a8a' : '#111'}" stroke-width="2"/></svg>` : ''}</span>`;
};
const branch = (level, exp, first) => {
  const x = level === 1 ? 10.5 : 7.5, w = level === 1 ? 24 : 21;
  let p = `<path d="M${x} ${first ? 2 : 0}V19M${x} 9.500H${x + 10}" stroke="#a0a0a0"/>`;
  if (exp) p += `<path d="M${x - 5} 4.500h10v10h-10z" fill="#fff" stroke="#777"/><path d="M${x - 3} 9.500h6${exp === '+' ? `M${x} 6.500v6` : ''}" stroke="#444"/>`;
  return `<svg class="tl" viewBox="0 0 ${w} 19">${p}</svg>`;
};
const swatch = c => {
  if (!c) return '<span class="sw"></span>';
  const col = c.slice(c.indexOf('#'));
  let p = '<rect width="23" height="16"/>';
  if (c.startsWith('dash')) p += `<path d="M1 0h1v4h-1zM9 0h3v3h-3zM18 0h3v3h-3zM0 5h2v3h-2zM20 7h3v3h-3zM0 12h2v4h-2zM7 13h3v3h-3zM16 13h3v3h-3z" fill="${col}"/>`;
  else p += `<rect x="1.500" y="1.500" width="20" height="13" fill="none" stroke="${col}"/>`;
  if (c.startsWith('dot')) {
    let d = '';
    for (let y = 3; y < 14; y += 2) for (let x = 3 + (y % 4 === 1 ? 2 : 0); x < 21; x += 4) d += `M${x} ${y}h1v1h-1z`;
    p += `<path d="${d}" fill="${col}"/>`;
  }
  return `<svg class="sw" viewBox="0 0 23 16">${p}</svg>`;
};
document.getElementById('rows').innerHTML = objects.map(([lvl, exp, name, v, s, c], i) => {
  const guide = lvl === 2
    ? '<svg class="tl" viewBox="0 0 24 19"><path d="M10.500 0V19" stroke="#a0a0a0"/></svg>' + branch(2, exp, false)
    : branch(1, exp, i === 0);
  const last = i === objects.length - 1;
  return `<div class="row${name === 'Via' ? ' hot' : ''}">${guide}<span class="name">${name}</span>${last ? '' : checkbox(v) + checkbox(s)}${last ? '' : swatch(c)}</div>`;
}).join('');

// Flylines of the standard-cell cluster: a rectilinear spanning tree over scattered cells
const outline = [[188,86],[240,90],[262,97],[320,88],[370,82],[400,68],[440,55],[470,58],[472,72],[500,65],[520,85],[575,80],[600,98],[640,115],[660,140],[675,180],[680,215],[678,260],[662,310],[645,355],[632,410],[622,480],[595,520],[560,538],[530,548],[480,541],[410,541],[290,536],[225,512],[190,465],[150,440],[110,405],[80,350],[73,315],[80,275],[100,240],[130,205],[165,200],[168,155],[185,120]];
const voids = [[345,138,38,18],[465,88,18,14],[422,142,22,18],[520,168,30,8],[205,165,24,10],[290,200,20,10],[258,130,10,12],[150,275,18,6],[340,242,36,5],[150,345,12,10],[375,297,14,6],[600,180,12,8],[125,300,8,10],[450,310,14,6],[580,440,10,8],[430,450,14,6],[205,350,8,12]];
let seed = 20231;
const rnd = () => (seed = (seed * 1103515245 + 12345) % 2147483648) / 2147483648;
const inside = (x, y) => {
  let c = false;
  for (let i = 0, j = outline.length - 1; i < outline.length; j = i++) {
    const [a, b] = outline[i], [e, f] = outline[j];
    if ((b > y) !== (f > y) && x < (e - a) * (y - b) / (f - b) + a) c = !c;
  }
  return c && !voids.some(([vx, vy, rx, ry]) => ((x - vx) / rx) ** 2 + ((y - vy) / ry) ** 2 < 1);
};
const cells = [];
for (let y = 58; y < 550; y += 9) {
  for (let x = 72; x < 692; x += 15) {
    const px = x + rnd() * 15 - 5, py = y;
    if (inside(px, py) && rnd() < 0.84) cells.push([Math.round(610 + px / 3), Math.round(200 + py / 3)]);
  }
}
let red = '', cyan = '';
for (const [x, y] of cells) red += `M${x} ${y - 2}h5v4h-5z`;
const n = cells.length, dist = Array(n).fill(1e9), from = Array(n).fill(0), done = Array(n).fill(false);
let k = 0;
for (let step = 1; step < n; step++) {
  done[k] = true;
  let best = -1;
  for (let i = 0; i < n; i++) {
    if (done[i]) continue;
    const d = Math.abs(cells[i][0] - cells[k][0]) + Math.abs(cells[i][1] - cells[k][1]) + rnd() * 1.5;
    if (d < dist[i]) { dist[i] = d; from[i] = k; }
    if (best < 0 || dist[i] < dist[best]) best = i;
  }
  const [ax, ay] = cells[from[best]], [bx, by] = cells[best];
  cyan += rnd() < 0.5 ? `M${ax} ${ay}H${bx}V${by}` : `M${ax} ${ay}V${by}H${bx}`;
  k = best;
}
document.getElementById('red').setAttribute('d', red);
document.getElementById('cyan').setAttribute('d', cyan);
```
